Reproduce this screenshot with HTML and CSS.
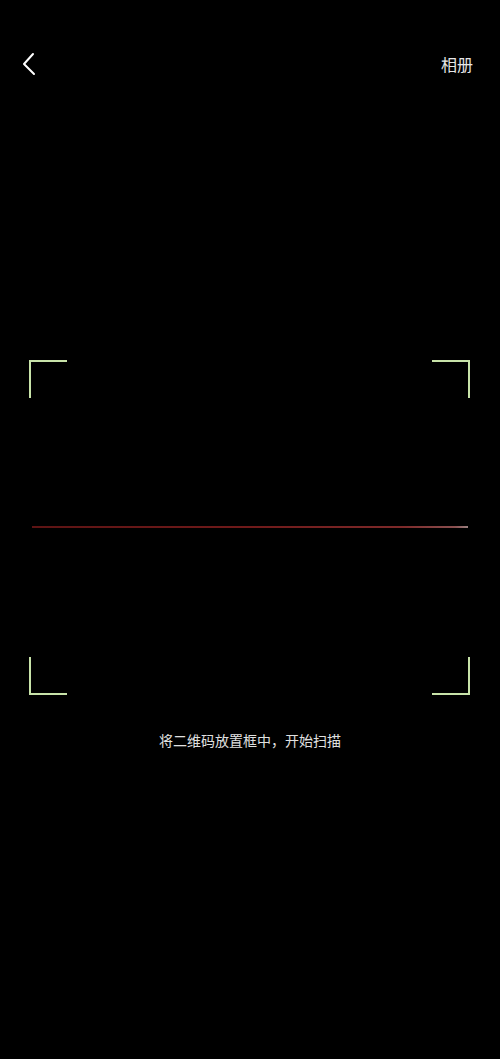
FILE: index.html
```html
<!DOCTYPE html>
<html lang="zh-CN">
<head>
<meta charset="utf-8">
<title>扫一扫</title>
<link rel="stylesheet" href="styles.css">
</head>
<body>
<div class="page">
  <div class="header">
    <svg class="back" width="14" height="24" viewBox="0 0 14 24">
      <polyline points="11,2 2,12 12,22" fill="none" stroke="#ffffff" stroke-width="2" stroke-linecap="round" stroke-linejoin="round"/>
    </svg>
    <span class="album">相册</span>
  </div>
  <div class="scanner">
    <span class="corner tl"></span>
    <span class="corner tr"></span>
    <span class="corner bl"></span>
    <span class="corner br"></span>
    <span class="scanline"></span>
  </div>
  <p class="hint">将二维码放置框中，开始扫描</p>
</div>
</body>
</html>
```
FILE: styles.css
```css
html, body {
  margin: 0;
  padding: 0;
  background: #000;
}
.page {
  width: 500px;
  height: 1059px;
  background: #000;
  font-family: "Noto Sans CJK SC", "Noto Sans", sans-serif;
  overflow: hidden;
}
.header {
  display: flex;
  justify-content: space-between;
  align-items: center;
  height: 28px;
  padding: 50px 27px 0 22px;
}
.back {
  display: block;
}
.album {
  color: #e6e6e6;
  font-size: 16px;
  line-height: 28px;
}
.scanner {
  position: relative;
  width: 441px;
  height: 335px;
  margin: 282px 0 0 29px;
}
.corner {
  position: absolute;
  width: 36px;
  height: 36px;
  border: 0 solid #c8e3a9;
}
.tl { left: 0; top: 0; border-left-width: 2px; border-top-width: 2px; }
.tr { right: 0; top: 0; border-right-width: 2px; border-top-width: 2px; }
.bl { left: 0; bottom: 0; border-left-width: 2px; border-bottom-width: 2px; }
.br { right: 0; bottom: 0; border-right-width: 2px; border-bottom-width: 2px; }
.scanline {
  position: absolute;
  left: 3px;
  top: 166px;
  width: 436px;
  height: 2px;
  background: linear-gradient(90deg, #5e1414 0%, #701a1a 50%, #7e2a2a 85%, #8a5050 97%, #9a8080 100%);
}
.hint {
  margin: 35px 0 0;
  text-align: center;
  color: #e0e0e0;
  font-size: 14px;
  line-height: 20px;
}
```
